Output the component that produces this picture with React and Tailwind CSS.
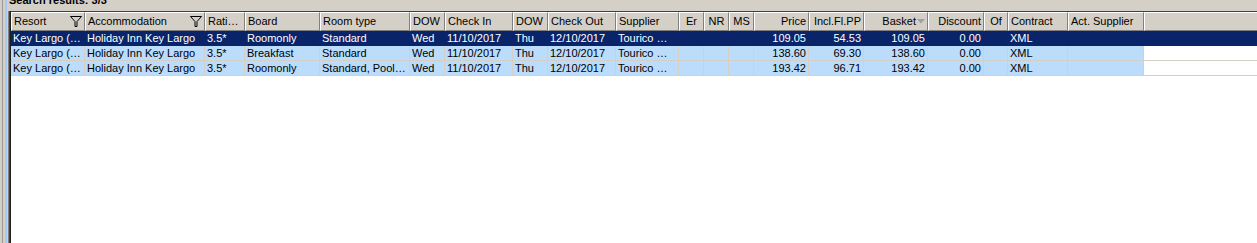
import React from "react";

const columns = [
  { key: "resort", label: "Resort", w: "w-[74px]", filter: true },
  { key: "hotel", label: "Accommodation", w: "w-[120px]", filter: true },
  { key: "rating", label: "Rati…", w: "w-[40px]" },
  { key: "board", label: "Board", w: "w-[75px]" },
  { key: "room", label: "Room type", w: "w-[90px]" },
  { key: "dowIn", label: "DOW", w: "w-[35px]" },
  { key: "checkIn", label: "Check In", w: "w-[68px]" },
  { key: "dowOut", label: "DOW", w: "w-[35px]" },
  { key: "checkOut", label: "Check Out", w: "w-[68px]" },
  { key: "supplier", label: "Supplier", w: "w-[63px]" },
  { key: "er", label: "Er", w: "w-[25px]", center: true },
  { key: "nr", label: "NR", w: "w-[25px]", center: true },
  { key: "ms", label: "MS", w: "w-[25px]", center: true },
  { key: "price", label: "Price", w: "w-[55px]", right: true },
  { key: "incl", label: "Incl.Fl.PP", w: "w-[55px]", right: true },
  { key: "basket", label: "Basket", w: "w-[64px]", right: true, sort: true },
  { key: "discount", label: "Discount", w: "w-[56px]", right: true },
  { key: "of", label: "Of", w: "w-[24px]", center: true },
  { key: "contract", label: "Contract", w: "w-[60px]" },
  { key: "actSupplier", label: "Act. Supplier", w: "w-[76px]" },
];

const base = {
  resort: "Key Largo (…",
  hotel: "Holiday Inn Key Largo",
  rating: "3.5*",
  dowIn: "Wed",
  checkIn: "11/10/2017",
  dowOut: "Thu",
  checkOut: "12/10/2017",
  supplier: "Tourico …",
  er: "",
  nr: "",
  ms: "",
  discount: "0.00",
  of: "",
  contract: "XML",
  actSupplier: "",
};

const rows = [
  { ...base, board: "Roomonly", room: "Standard", price: "109.05", incl: "54.53", basket: "109.05", selected: true },
  { ...base, board: "Breakfast", room: "Standard", price: "138.60", incl: "69.30", basket: "138.60" },
  { ...base, board: "Roomonly", room: "Standard, Pool…", price: "193.42", incl: "96.71", basket: "193.42" },
];

const FilterIcon = () => (
  <svg width="12" height="11" viewBox="0 0 12 11" className="shrink-0">
    <path d="M0.5 0.5 H11.5 L7 5.5 V10.5 H5 V5.5 Z" fill="none" stroke="#000" strokeWidth="1" />
  </svg>
);

const SortArrow = () => (
  <svg width="8" height="5" viewBox="0 0 8 5" className="shrink-0 ml-[1px]">
    <path d="M0 0 H8 L4 4.5 Z" fill="#a0a0a0" />
  </svg>
);

const App = () => {
  return (
    <div
      className="w-[1257px] h-[243px] bg-[#d4d0c8] flex overflow-hidden text-[11px] text-black"
      style={{ fontFamily: '"Liberation Sans", Arial, sans-serif' }}
    >
      {/* splitter edge */}
      <div className="flex h-full shrink-0">
        <div className="w-[2px] bg-[#d4d0c8]" />
        <div className="w-[1px] bg-[#9a9a9a]" />
        <div className="w-[2px] bg-[#d4d0c8]" />
        <div className="w-[2px] bg-[#a6caf0]" />
      </div>

      <div className="flex-1 flex flex-col min-w-0">
        <div className="h-[11px] shrink-0 overflow-hidden pl-[2px]">
          <div className="-mt-[6px] leading-[13px] font-bold whitespace-nowrap">Search results: 3/3</div>
        </div>

        <div className="flex-1 flex min-h-0">
          <div className="w-[1px] bg-[#d4d0c8]" />
          <div className="w-[1px] bg-[#808080]" />
          <div className="w-[1px] bg-[#404040]" />
          <div className="w-[1px] bg-[#202020]" />

          <div className="flex-1 bg-white border-t border-[#404040] flex flex-col min-w-0">
            <div className="flex h-[19px] shrink-0">
              {columns.map((col) => (
                <div
                  key={col.key}
                  className={`${col.w} shrink-0 h-full bg-[#d4d0c8] border-t border-l border-t-white border-l-white border-r border-b border-r-[#808080] border-b-[#808080] flex items-center px-[2px] whitespace-nowrap overflow-hidden ${
                    col.right ? "justify-end" : col.center ? "justify-center" : "justify-between"
                  }`}
                >
                  <span>{col.label}</span>
                  {col.filter && <FilterIcon />}
                  {col.sort && <SortArrow />}
                </div>
              ))}
              <div className="flex-1 h-full bg-[#d4d0c8] border-t border-l border-t-white border-l-white border-b border-b-[#808080]" />
            </div>

            {rows.map((row, i) => (
              <div
                key={i}
                className={`flex h-[15px] shrink-0 ${row.selected ? "bg-[#0a246a] text-white" : ""}`}
              >
                {columns.map((col) => (
                  <div
                    key={col.key}
                    className={`${col.w} shrink-0 h-full leading-[14px] px-[2px] whitespace-nowrap overflow-hidden border-b border-r ${
                      row.selected ? "border-[#0a246a]" : "bg-[#bcdcfc] border-[#d4d0c8]"
                    } ${col.right ? "text-right" : col.center ? "text-center" : "text-left"}`}
                  >
                    {row[col.key]}
                  </div>
                ))}
                <div
                  className={`flex-1 h-full border-b ${row.selected ? "border-[#0a246a]" : "border-[#d4d0c8]"}`}
                />
              </div>
            ))}
          </div>
        </div>
      </div>
    </div>
  );
};

export default App;
